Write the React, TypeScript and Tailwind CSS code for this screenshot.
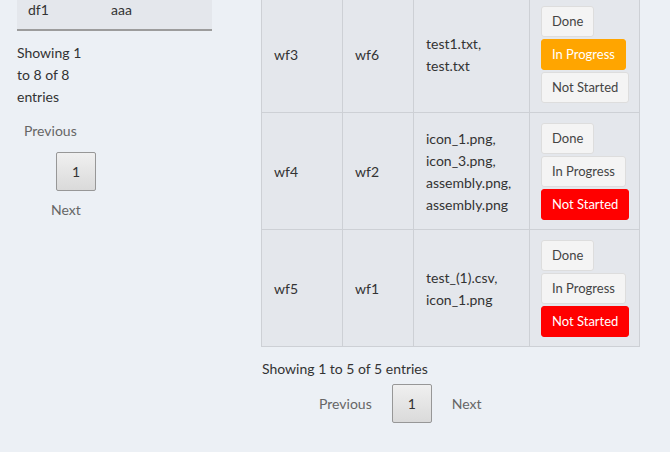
const rows = [
  { id: "wf3", parent: "wf6", files: ["test1.txt,", "test.txt"], status: "progress" },
  { id: "wf4", parent: "wf2", files: ["icon_1.png,", "icon_3.png,", "assembly.png,", "assembly.png"], status: "not" },
  { id: "wf5", parent: "wf1", files: ["test_(1).csv,", "icon_1.png"], status: "not" },
];

const StatusButtons = ({ status }: { status: string }) => {
  const base = "h-[31px] px-[10px] rounded-[3px] border text-[13px] text-left leading-none whitespace-nowrap";
  const plain = "bg-[#f4f4f4] border-[#dddddd] text-[#444]";
  return (
    <div className="flex flex-col items-start gap-[2px]">
      <button className={`${base} ${plain}`}>Done</button>
      <button className={`${base} ${status === "progress" ? "bg-[#ffa500] border-[#ffa500] text-white" : plain}`}>
        In Progress
      </button>
      <button className={`${base} ${status === "not" ? "bg-[#ff0000] border-[#ff0000] text-white" : plain}`}>
        Not Started
      </button>
    </div>
  );
};

const PageButton = () => (
  <div className="w-[40px] h-[39px] flex items-center justify-center border border-[#979797] rounded-[2px] bg-gradient-to-b from-[#f0f0f0] to-[#dadada] text-[#333] text-[14px]">
    1
  </div>
);

export default function App() {
  return (
    <div className="w-[670px] h-[452px] overflow-hidden bg-[#ecf0f5] flex text-[#333] text-[14px] leading-[22px] font-['Lato','Liberation_Sans',sans-serif]">
      {/* left panel */}
      <div className="w-[244px] shrink-0 pl-[17px]">
        <table className="-mt-[9px] w-[195px] table-fixed border-collapse">
          <colgroup>
            <col className="w-[83px]" />
            <col />
          </colgroup>
          <tbody>
            <tr className="bg-[#e4e7ec] border-b-2 border-[#9c9c9c]">
              <td className="py-[8px] pl-[11px]">df1</td>
              <td className="py-[8px] pl-[11px]">aaa</td>
            </tr>
          </tbody>
        </table>
        <div className="w-[76px] mt-[11px]">Showing 1 to 8 of 8 entries</div>
        <div className="flex flex-col items-start">
          <span className="mt-[12px] ml-[7px] text-[#666]">Previous</span>
          <div className="mt-[10px] ml-[39px]">
            <PageButton />
          </div>
          <span className="mt-[8px] ml-[34px] text-[#666]">Next</span>
        </div>
      </div>

      {/* right panel */}
      <div className="pl-[17px]">
        <table className="-mt-[5px] w-[379px] table-fixed border-collapse border-b border-b-[#a9a9a9]">
          <colgroup>
            <col className="w-[81px]" />
            <col className="w-[71px]" />
            <col className="w-[116px]" />
            <col />
          </colgroup>
          <tbody>
            {rows.map((r) => (
              <tr key={r.id} className="bg-[#e4e7ec]">
                <td className="border border-[#cdd0d5] px-[12px] pt-[10px] pb-[9px] align-middle">{r.id}</td>
                <td className="border border-[#cdd0d5] px-[12px] pt-[10px] pb-[9px] align-middle">{r.parent}</td>
                <td className="border border-[#cdd0d5] px-[12px] pt-[10px] pb-[9px] align-middle">
                  {r.files.map((f, i) => (
                    <div key={i}>{f}</div>
                  ))}
                </td>
                <td className="border border-[#cdd0d5] px-[11px] pt-[10px] pb-[9px] align-middle">
                  <StatusButtons status={r.status} />
                </td>
              </tr>
            ))}
          </tbody>
        </table>
        <div className="mt-[11px] pl-[1px]">Showing 1 to 5 of 5 entries</div>
        <div className="flex items-center mt-[4px] pl-[58px] gap-[20px] text-[#666]">
          <span>Previous</span>
          <PageButton />
          <span>Next</span>
        </div>
      </div>
    </div>
  );
}
